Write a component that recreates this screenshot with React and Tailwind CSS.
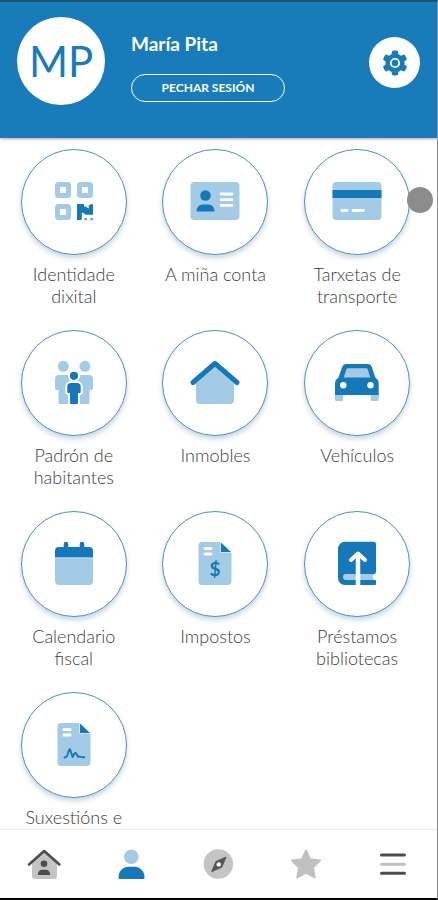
const DARK = "#1478b9"
const LIGHT = "#a3cbe5"

function QrIcon() {
  return (
    <svg viewBox="0 0 52 52" className="w-[52px] h-[52px]" aria-hidden="true">
      <g fill="none" stroke={LIGHT} strokeWidth="5">
        <rect x="9.5" y="8.5" width="11" height="11" rx="1" />
        <rect x="31.5" y="8.5" width="11" height="11" rx="1" />
        <rect x="9.5" y="30.5" width="11" height="11" rx="1" />
      </g>
      <path fill={DARK} d="M29.6 28h6.4v2.6h1.4l3.4 2V29h1.4v-.8H45v10.6h-7.4l-2.4-2h-1.4v6.6l-.8.6h-4V28.6z" />
      <path fill={DARK} opacity=".7" d="M36.5 42h2.6v2.2h-2.6zM42.3 42h2.6v2.2h-2.6z" />
    </svg>
  )
}

function IdCardIcon() {
  return (
    <svg viewBox="0 0 52 52" className="w-[52px] h-[52px]" aria-hidden="true">
      <rect x="1.5" y="6" width="49" height="38" rx="4" fill={LIGHT} />
      <circle cx="16.5" cy="19.5" r="5.3" fill={DARK} />
      <path fill={DARK} d="M7.5 35.5c0-4.5 3-7 6.5-7h5c3.5 0 6.5 2.5 6.5 7z" />
      <path stroke="#fff" strokeWidth="2.8" strokeLinecap="round" d="M32 18h11M32 23.7h11M32 29.3h11" />
    </svg>
  )
}

function CreditCardIcon() {
  return (
    <svg viewBox="0 0 52 52" className="w-[52px] h-[52px]" aria-hidden="true">
      <rect x="1.5" y="6" width="49" height="38" rx="4" fill={LIGHT} />
      <path fill={DARK} d="M1.5 14h49v8h-49z" />
      <path stroke="#fff" strokeWidth="2.8" strokeLinecap="round" d="M10.7 34.5h5.5M22 34.5h10.5" />
    </svg>
  )
}

function PeopleIcon() {
  return (
    <svg viewBox="0 0 52 52" className="w-[52px] h-[52px]" aria-hidden="true">
      <g fill={LIGHT}>
        <circle cx="15.3" cy="9.3" r="5.5" />
        <circle cx="36.9" cy="9.3" r="5.5" />
        <path d="M11 18h9.5a4 4 0 0 1 4 4v23.5a1.5 1.5 0 0 1-1.5 1.5h-11a1.5 1.5 0 0 1-1.5-1.5V33h-1.5a2 2 0 0 1-2-2v-9a4 4 0 0 1 4-4z" />
        <path d="M41 18h-9.5a4 4 0 0 0-4 4v23.5a1.5 1.5 0 0 0 1.5 1.5h11a1.5 1.5 0 0 0 1.5-1.5V33h1.5a2 2 0 0 0 2-2v-9a4 4 0 0 0-4-4z" />
      </g>
      <g fill={DARK} stroke="#fff" strokeWidth="4" paintOrder="stroke">
        <path d="M23 26h6a3.7 3.7 0 0 1 3.7 3.7V35a1 1 0 0 1-1 1H30v10a1 1 0 0 1-1 1h-6a1 1 0 0 1-1-1V36h-1.7a1 1 0 0 1-1-1v-5.3A3.7 3.7 0 0 1 23 26z" />
        <circle cx="26" cy="18.8" r="4.1" />
      </g>
    </svg>
  )
}

function HouseIcon() {
  return (
    <svg viewBox="0 0 52 52" className="w-[52px] h-[52px]" aria-hidden="true">
      <path fill={LIGHT} d="M26 10 45 26.5V43a4 4 0 0 1-4 4H11a4 4 0 0 1-4-4V26.5z" />
      <path fill="none" stroke={DARK} strokeWidth="5" strokeLinecap="round" strokeLinejoin="round" d="M4 25.500 26 6.500l22 19" />
    </svg>
  )
}

function CarIcon() {
  return (
    <svg viewBox="0 0 52 52" className="w-[52px] h-[52px]" aria-hidden="true">
      <path fill={LIGHT} d="M4 36h8.2v6.5a1.5 1.5 0 0 1-1.5 1.5H5.5A1.5 1.5 0 0 1 4 42.5zM39.700 36h8v6.500a1.500 1.500 0 0 1-1.500 1.500h-5a1.500 1.500 0 0 1-1.500-1.500zM14 9h24l4 13H10z" />
      <path fill={DARK} fillRule="evenodd" d="M15.500 7h21c2.400 0 3.700 1.200 4.400 3.300l3.500 10.500c2 1 3.300 3 3.300 5.400V38H4V26.200c0-2.400 1.400-4.400 3.400-5.400l3.700-10.500C11.900 8.200 13.100 7 15.500 7zm1.300 4.200c-.7 0-1.200.3-1.400 1L12.700 20.400h26.600l-2.600-8.200c-.2-.7-.7-1-1.400-1z" />
      <circle cx="12.3" cy="28.3" r="3.2" fill="#fff" />
      <circle cx="39.5" cy="28.3" r="3.2" fill="#fff" />
    </svg>
  )
}

function CalendarIcon() {
  return (
    <svg viewBox="0 0 52 52" className="w-[52px] h-[52px]" aria-hidden="true">
      <path fill={LIGHT} d="M7 20.3h38V43a4 4 0 0 1-4 4H11a4 4 0 0 1-4-4z" />
      <path fill={DARK} d="M7 19.6V13a4 4 0 0 1 4-4h4.700V6a2.300 2.300 0 0 1 4.600 0v3h11.400V6a2.300 2.300 0 0 1 4.600 0v3H41a4 4 0 0 1 4 4v6.600z" />
    </svg>
  )
}

function DocBase() {
  return (
    <>
      <path fill={LIGHT} d="M13 4h18.5v10.5h11V43a4 4 0 0 1-4 4H13a3.500 3.500 0 0 1-3.500-3.500v-36A3.500 3.500 0 0 1 13 4z" />
      <path fill={DARK} d="M32 4.500 42 14H32z" />
      <path stroke="#fff" strokeWidth="3.2" d="M14.700 10.500h8.600M14.700 16h8.600" />
    </>
  )
}

function InvoiceIcon() {
  return (
    <svg viewBox="0 0 52 52" className="w-[52px] h-[52px]" aria-hidden="true">
      <DocBase />
      <text x="26" y="38" textAnchor="middle" fontSize="19" fontWeight="700" fontFamily="Lato, sans-serif" fill={DARK}>$</text>
    </svg>
  )
}

function SignatureIcon() {
  return (
    <svg viewBox="0 0 52 52" className="w-[52px] h-[52px]" aria-hidden="true">
      <DocBase />
      <path fill="none" stroke={DARK} strokeWidth="1.9" strokeLinecap="round" strokeLinejoin="round" d="M16.500 38.500c2 0 2.500-1 3-2.700l1.700-5c.3-1 .9-.8 1.100 0l2.200 7.200 2-3.500c.5-.9 1.200-.9 1.700 0l1.800 3c.8.800 1.300-.3 2.300.3 1 .7 2.300.5 4 .5" />
    </svg>
  )
}

function BookIcon() {
  return (
    <svg viewBox="0 0 52 52" className="w-[52px] h-[52px]" aria-hidden="true">
      <path fill={DARK} d="M14 3.700h28.500A2.500 2.500 0 0 1 45 6.200v27.300a2.500 2.500 0 0 1-2.500 2.500L41 39l1.500 3H44a1 1 0 0 1 1 1v3a1 1 0 0 1-1 1H14a7 7 0 0 1-7-7V10.700a7 7 0 0 1 7-7z" />
      <path fill={LIGHT} d="M15 36h28l-1.800 3 1.800 3H15a3 3 0 0 1 0-6z" />
      <path fill="none" stroke="#fff" strokeWidth="4" strokeLinecap="round" strokeLinejoin="round" d="m20 22 7-6.500 7 6.500M27 16v14" />
      <path stroke="#fff" strokeWidth="4.5" d="M27 18v30" />
    </svg>
  )
}

const services = [
  { label: "Identidade dixital", icon: <QrIcon /> },
  { label: "A miña conta", icon: <IdCardIcon /> },
  { label: "Tarxetas de transporte", icon: <CreditCardIcon /> },
  { label: "Padrón de habitantes", icon: <PeopleIcon /> },
  { label: "Inmobles", icon: <HouseIcon /> },
  { label: "Vehículos", icon: <CarIcon /> },
  { label: "Calendario fiscal", icon: <CalendarIcon /> },
  { label: "Impostos", icon: <InvoiceIcon /> },
  { label: "Préstamos bibliotecas", icon: <BookIcon /> },
  { label: "Suxestións e", icon: <SignatureIcon /> },
]

const tabs = [
  {
    name: "Inicio",
    icon: (
      <svg viewBox="0 0 36 36" className="w-9 h-9" aria-hidden="true">
        <path fill="#c4c4c4" d="M18 6 31 17v13a3 3 0 0 1-3 3H9a3 3 0 0 1-3-3V17z" />
        <path fill="none" stroke="#4d4d4f" strokeWidth="2.6" strokeLinecap="round" strokeLinejoin="round" d="M3 18.500 18.200 5l15.200 13.500" />
        <circle cx="18" cy="17.7" r="3.3" fill="#4d4d4f" />
        <path fill="#4d4d4f" d="M11.800 29c0-3.400 2-5.200 4.400-5.200h3.600c2.400 0 4.400 1.800 4.400 5.200z" />
      </svg>
    ),
  },
  {
    name: "Perfil",
    icon: (
      <svg viewBox="0 0 36 36" className="w-9 h-9" aria-hidden="true">
        <circle cx="18.3" cy="10.8" r="7.3" fill={LIGHT} />
        <path fill={DARK} d="M5.500 31.500c0-6.300 4.500-10.700 10-10.700h6c5.500 0 10 4.400 10 10.700 0 1-.6 1.500-1.500 1.500H7c-.9 0-1.500-.5-1.500-1.500z" />
      </svg>
    ),
  },
  {
    name: "Explorar",
    icon: (
      <svg viewBox="0 0 36 36" className="w-9 h-9" aria-hidden="true">
        <circle cx="18.3" cy="18" r="14.7" fill="#c4c4c4" />
        <path fill="#5a5654" d="M25.700 10.800c.5-.2.900.2.700.7l-4 9.200c-.3.600-.6 1-1.200 1.200l-9.200 4c-.5.200-.9-.2-.7-.7l4-9.200c.3-.6.600-1 1.200-1.200z" />
        <circle cx="18.8" cy="18.400" r="2.200" fill="#fff" />
      </svg>
    ),
  },
  {
    name: "Favoritos",
    icon: (
      <svg viewBox="0 0 36 36" className="w-9 h-9" aria-hidden="true">
        <path fill="#c0c0c0" stroke="#c0c0c0" strokeWidth="2" strokeLinejoin="round" d="m18 4.500 4.100 8.800 9.900 1.300-7.200 6.800 1.900 10.100-8.700-4.900-8.700 4.900 1.900-10.100L4 14.600l9.900-1.300z" />
      </svg>
    ),
  },
  {
    name: "Menú",
    icon: (
      <svg viewBox="0 0 36 36" className="w-9 h-9" aria-hidden="true">
        <path stroke="#4d4d4f" strokeWidth="3" strokeLinecap="round" d="M6.500 9h23M6.500 27.300h23" />
        <path stroke="#c0c0c0" strokeWidth="3" strokeLinecap="round" d="M6.500 18.200h23" />
      </svg>
    ),
  },
]

export default function App() {
  return (
    <div className="flex h-screen w-full flex-col overflow-hidden border-t-2 border-r border-b-2 border-t-[#1d5377] border-r-[#8c8c8c] border-b-black bg-white font-[Lato,sans-serif]">

      {/* HEADER */}
      <header className="relative z-10 flex shrink-0 items-start justify-between bg-[#187bba] px-[17px] pt-[15px] pb-[33px] shadow-[0_1px_3px_rgba(0,0,0,0.35)]">
        <div className="flex gap-[26px]">
          <div className="flex h-[88px] w-[88px] items-center justify-center rounded-full bg-white text-[42px] leading-none text-[#187bba]">
            MP
          </div>
          <div className="flex flex-col items-start gap-[18px] pt-[15px]">
            <h1 className="text-[19px] leading-6 font-bold text-white">María Pita</h1>
            <button type="button" className="h-7 w-[154px] rounded-full border border-white text-xs font-bold text-white">
              PECHAR SESIÓN
            </button>
          </div>
        </div>
        <button type="button" aria-label="Axustes" className="mt-5 flex h-[51px] w-[51px] items-center justify-center rounded-full bg-white">
          <svg viewBox="0 0 26 26" className="h-[26px] w-[26px]" aria-hidden="true">
            <g fill="#187bba">
              <circle cx="13" cy="13" r="9.6" />
              <rect x="9.800" y="0.500" width="6.400" height="25" rx="1.800" />
              <rect x="9.800" y="0.500" width="6.400" height="25" rx="1.800" transform="rotate(60 13 13)" />
              <rect x="9.800" y="0.500" width="6.400" height="25" rx="1.800" transform="rotate(120 13 13)" />
            </g>
            <circle cx="13" cy="13" r="4.2" fill="#187bba" stroke="#fff" strokeWidth="1.8" />
          </svg>
        </button>
      </header>

      {/* SERVICES */}
      <main className="relative min-h-0 flex-1 overflow-hidden pt-[11px] pr-[9px] pl-[3px]">
        <div className="grid grid-cols-3 gap-y-[23px]">
          {services.map((s) => (
            <a key={s.label} href="#" className="flex min-h-[158px] flex-col items-center gap-2">
              <span className="flex h-[106px] w-[106px] items-center justify-center rounded-full border border-[#4a92c8] bg-white shadow-[0_3px_5px_rgba(40,90,130,0.25)]">
                {s.icon}
              </span>
              <span className="w-[114px] text-center text-[18px] leading-[22px] font-light text-[#3c3c3c]">
                {s.label}
              </span>
            </a>
          ))}
        </div>
        {/* touch pointer */}
        <div className="absolute top-[49px] right-1 h-[26px] w-[26px] rounded-full bg-[#8c8c8c]" />
      </main>

      {/* BOTTOM NAV */}
      <nav className="grid shrink-0 grid-cols-5 border-t border-[#ececec] bg-white py-4">
        {tabs.map((t) => (
          <button key={t.name} type="button" aria-label={t.name} className="flex items-center justify-center">
            {t.icon}
          </button>
        ))}
      </nav>
    </div>
  )
}
